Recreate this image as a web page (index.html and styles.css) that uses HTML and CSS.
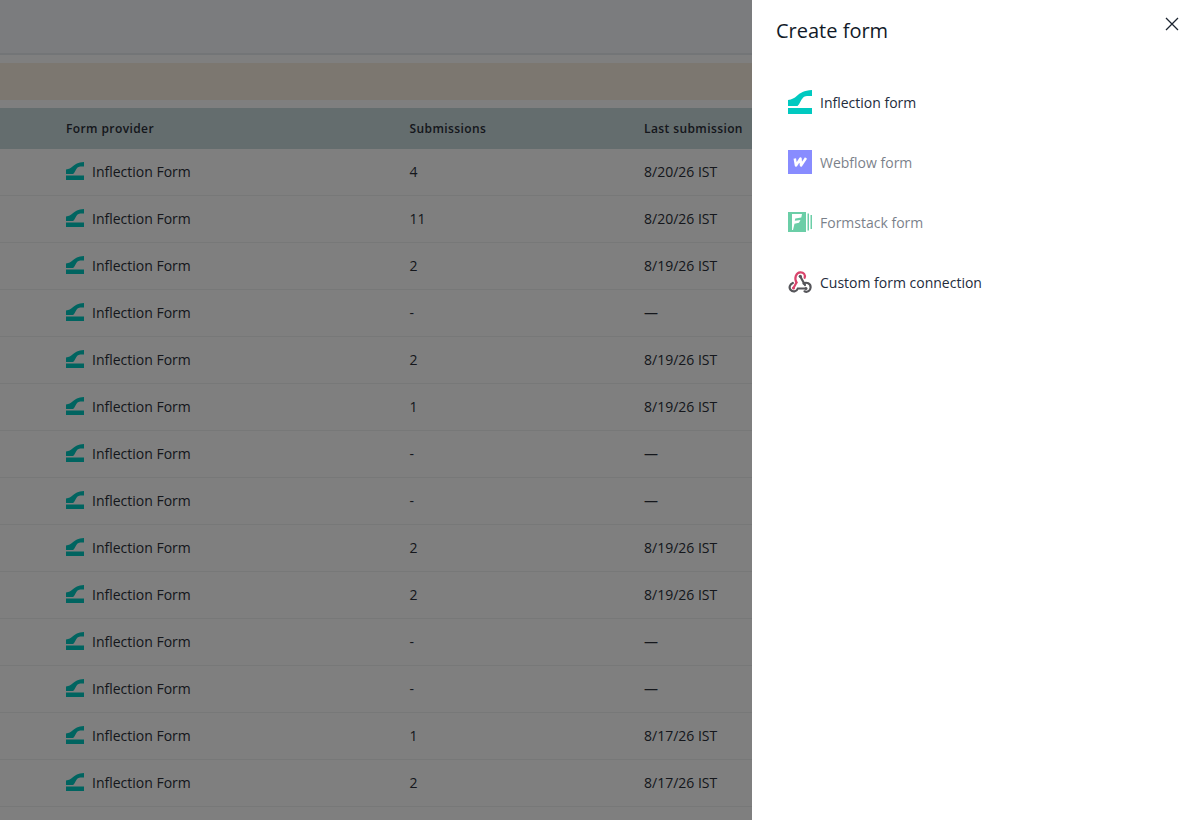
FILE: index.html
```html
<!DOCTYPE html>
<html lang="en">
<head>
<meta charset="utf-8">
<title>Create form</title>
<link rel="stylesheet" href="styles.css">
</head>
<body>
<svg class="defs" width="0" height="0" aria-hidden="true">
  <symbol id="inflection" viewBox="0 0 24 24">
    <path d="M24 0V6H19C15.500 6 14 9 12.500 11.500C11.500 13.500 10.500 15 9.500 16H0V10C4 9.500 6.500 8 8.700 6C12 3 16 .5 24 0Z"/>
    <rect x="0" y="18" width="24" height="6"/>
  </symbol>
</svg>
<main class="page">
  <header class="topbar"></header>
  <div class="banner"></div>
  <section class="table">
    <div class="row head"><span></span><span>Form provider</span><span>Submissions</span><span>Last submission</span></div>
    <div class="row"><span></span><span class="provider"><svg class="logo"><use href="#inflection"/></svg>Inflection Form</span><span>4</span><span>8/20/26 IST</span></div>
    <div class="row"><span></span><span class="provider"><svg class="logo"><use href="#inflection"/></svg>Inflection Form</span><span>11</span><span>8/20/26 IST</span></div>
    <div class="row"><span></span><span class="provider"><svg class="logo"><use href="#inflection"/></svg>Inflection Form</span><span>2</span><span>8/19/26 IST</span></div>
    <div class="row"><span></span><span class="provider"><svg class="logo"><use href="#inflection"/></svg>Inflection Form</span><span>-</span><span>—</span></div>
    <div class="row"><span></span><span class="provider"><svg class="logo"><use href="#inflection"/></svg>Inflection Form</span><span>2</span><span>8/19/26 IST</span></div>
    <div class="row"><span></span><span class="provider"><svg class="logo"><use href="#inflection"/></svg>Inflection Form</span><span>1</span><span>8/19/26 IST</span></div>
    <div class="row"><span></span><span class="provider"><svg class="logo"><use href="#inflection"/></svg>Inflection Form</span><span>-</span><span>—</span></div>
    <div class="row"><span></span><span class="provider"><svg class="logo"><use href="#inflection"/></svg>Inflection Form</span><span>-</span><span>—</span></div>
    <div class="row"><span></span><span class="provider"><svg class="logo"><use href="#inflection"/></svg>Inflection Form</span><span>2</span><span>8/19/26 IST</span></div>
    <div class="row"><span></span><span class="provider"><svg class="logo"><use href="#inflection"/></svg>Inflection Form</span><span>2</span><span>8/19/26 IST</span></div>
    <div class="row"><span></span><span class="provider"><svg class="logo"><use href="#inflection"/></svg>Inflection Form</span><span>-</span><span>—</span></div>
    <div class="row"><span></span><span class="provider"><svg class="logo"><use href="#inflection"/></svg>Inflection Form</span><span>-</span><span>—</span></div>
    <div class="row"><span></span><span class="provider"><svg class="logo"><use href="#inflection"/></svg>Inflection Form</span><span>1</span><span>8/17/26 IST</span></div>
    <div class="row"><span></span><span class="provider"><svg class="logo"><use href="#inflection"/></svg>Inflection Form</span><span>2</span><span>8/17/26 IST</span></div>
  </section>
</main>
<div class="scrim"></div>
<aside class="drawer">
  <div class="drawer-head">
    <h1>Create form</h1>
    <button class="close" aria-label="Close">
      <svg viewBox="0 0 14 14" width="14" height="14"><path d="M1 1L13 13M13 1L1 13"/></svg>
    </button>
  </div>
  <ul class="options">
    <li class="option">
      <svg class="opt-icon logo-bright" viewBox="0 0 24 24"><use href="#inflection"/></svg>
      <span>Inflection form</span>
    </li>
    <li class="option disabled">
      <svg class="opt-icon" viewBox="0 0 24 24">
        <rect width="24" height="24" fill="#3a40ff"/>
        <path d="M6.800 8.500L8 15.500L12.500 8.500L13 15.500L18 8" fill="none" stroke="#fff" stroke-width="2.500" stroke-linejoin="round"/>
      </svg>
      <span>Webflow form</span>
    </li>
    <li class="option disabled">
      <svg class="opt-icon" viewBox="0 0 24 24">
        <rect x="0" y="2" width="18" height="20" fill="#0aae6e"/>
        <rect x="19.500" y="3.500" width="1.500" height="17" fill="#0aae6e"/>
        <rect x="22.500" y="5" width="1.500" height="14" fill="#0aae6e"/>
        <path d="M4 4H14L13.300 7.500L7.300 8.500L6.800 10.800L12.500 10L11 12.800L6.500 13.700L5 20H4Z" fill="#fff"/>
      </svg>
      <span>Formstack form</span>
    </li>
    <li class="option">
      <svg class="opt-icon" viewBox="0 0 24 24" fill="none" stroke-width="2.200" stroke-linecap="round">
        <path d="M8.500 12.500C6 8.500 8 2.500 12.300 2.300C15.800 2.100 17.600 5 16.600 7.800" stroke="#d9446c"/>
        <path d="M8.500 12.500L5.500 18" stroke="#d9446c"/>
        <path d="M12.300 6.500L17 15" stroke="#55555a"/>
        <path d="M4.800 13C1.800 14.200 .7 17.500 2.500 19.800C4.700 22.500 8.700 21.800 9.800 18.500H17.500" stroke="#55555a"/>
        <path d="M15.500 13.500C18.500 11.700 22.800 13.500 22.600 17.500C22.400 20.800 19.300 22.700 16.500 21.300" stroke="#55555a"/>
        <circle cx="5.500" cy="18" r="1.500" fill="#d9446c" stroke="none"/>
        <circle cx="18" cy="18.500" r="1.500" fill="#55555a" stroke="none"/>
        <circle cx="12.300" cy="6.300" r="1.600" fill="#55555a" stroke="none"/>
      </svg>
      <span>Custom form connection</span>
    </li>
  </ul>
</aside>
</body>
</html>
```
FILE: styles.css
```css
* { box-sizing: border-box; }
html, body { height: 100%; }
body {
  margin: 0;
  overflow: hidden;
  background: #fff;
  color: #1c2430;
  font-family: "Open Sans", sans-serif;
  font-size: 14px;
}
.defs { position: absolute; }
.page { height: 820px; overflow: hidden; background: #fff; }
.topbar { height: 55px; border-bottom: 2px solid #e6eaee; background: #f7f9fc; }
.banner { height: 37px; margin-top: 8px; background: #f9efe1; }
.table { margin-top: 8px; }
.row {
  display: grid;
  grid-template-columns: 66px 343.500px 234.500px 1fr;
  align-items: center;
  height: 47px;
  padding-bottom: 2px;
  border-bottom: 1px solid #eef0f1;
  background: #fff;
  color: #2a2f38;
}
.row.head {
  height: 41px;
  padding-bottom: 0;
  border-bottom: 0;
  background: #c9dadd;
  font-size: 12px;
  font-weight: 600;
  letter-spacing: .4px;
}
.provider { display: flex; align-items: center; gap: 8px; }
.logo { width: 18px; height: 18px; fill: #00c9c0; flex: none; }
.scrim { position: fixed; inset: 0; background: rgba(0, 0, 0, .5); }
.drawer {
  position: fixed;
  top: 0;
  right: 0;
  bottom: 0;
  width: 445px;
  background: #fff;
  padding: 0 24px;
}
.drawer-head { position: relative; height: 64px; display: flex; align-items: center; padding-bottom: 2px; }
h1 { margin: 0; font-size: 20px; font-weight: 500; line-height: 28px; color: #111a28; }
.close {
  position: absolute;
  top: 17px;
  right: -6px;
  width: 14px;
  height: 14px;
  padding: 0;
  border: 0;
  background: none;
  display: block;
}
.close svg { display: block; fill: none; stroke: #1c2430; stroke-width: 1.300; }
.options { list-style: none; margin: 8px 0 0; padding: 0 0 0 12px; }
.option {
  display: flex;
  align-items: center;
  gap: 8px;
  height: 60px;
  font-weight: 500;
  color: #232c3c;
}
.opt-icon { width: 24px; height: 24px; flex: none; }
.logo-bright { fill: #00c9c0; }
.disabled { opacity: .6; }
```
